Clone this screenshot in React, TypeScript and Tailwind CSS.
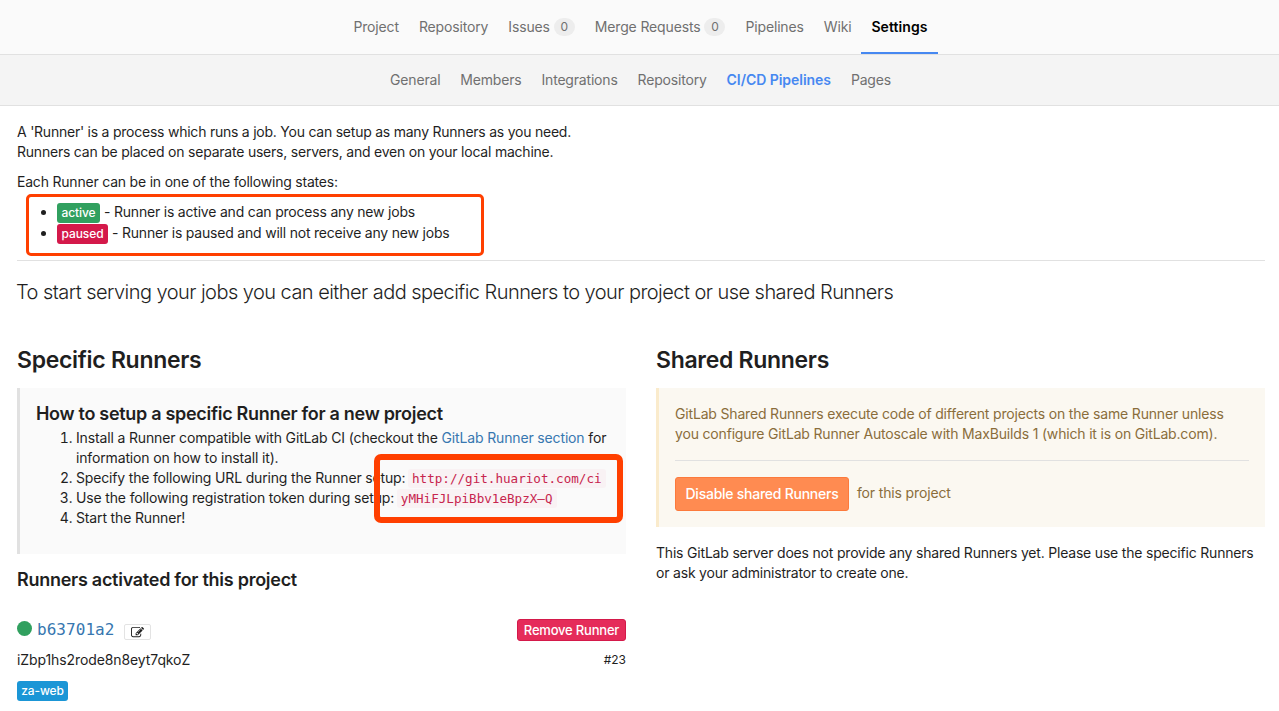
import type { ReactNode } from 'react';

const mainTabs = [
  { label: 'Project' },
  { label: 'Repository' },
  { label: 'Issues', count: 0 },
  { label: 'Merge Requests', count: 0 },
  { label: 'Pipelines' },
  { label: 'Wiki' },
  { label: 'Settings', active: true },
];

const subTabs = ['General', 'Members', 'Integrations', 'Repository', 'CI/CD Pipelines', 'Pages'];

function Code({ children }: { children: ReactNode }) {
  return (
    <code className="-ml-px rounded-[3px] bg-[#f9f2f4] px-1 py-0.5 font-['DejaVu_Sans_Mono',monospace] text-[12.6px] tracking-normal text-[#c7254e]">
      {children}
    </code>
  );
}

function EditIcon() {
  return (
    <svg viewBox="0 0 1792 1792" className="h-[13px] w-[13px] fill-[#1f1f1f]">
      <path d="M888 1184l116-116-152-152-116 116v56h96v96h56zm440-720q-16-16-33 1l-350 350q-17 17-1 33t33-1l350-350q17-17 1-33zm80 594v190q0 119-84.5 203.5t-203.5 84.5h-832q-119 0-203.5-84.5t-84.5-203.5v-832q0-119 84.5-203.5t203.5-84.5h832q63 0 117 25 15 7 18 23 3 17-9 29l-49 49q-14 14-32 8-23-6-45-6h-832q-66 0-113 47t-47 113v832q0 66 47 113t113 47h832q66 0 113-47t47-113v-126q0-13 9-22l64-64q15-15 35-7t20 29zm-96-738l288 288-672 672h-288v-288zm444 132l-92 92-288-288 92-92q28-28 68-28t68 28l152 152q28 28 28 68t-28 68z" />
    </svg>
  );
}

export default function App() {
  return (
    <div className="h-[711px] w-[1279px] overflow-hidden bg-white font-['Inter',sans-serif] text-[14px] leading-5 tracking-[-0.15px] text-[#1f1f1f]">
      <nav className="flex h-[55px] justify-center border-b border-[#e1e1e1] bg-[#fafafa] pl-[2px] text-[#707070]">
        {mainTabs.map((tab) => (
          <a
            key={tab.label}
            className={
              tab.active
                ? 'flex h-[54px] items-center border-b-2 border-[#4688f1] px-[10px] pt-0.5 font-semibold tracking-[0.08px] text-black'
                : 'flex h-[54px] items-center px-[10px] tracking-[-0.15px]'
            }
          >
            {tab.label}
            {tab.count !== undefined && (
              <span className="ml-1 flex h-[18px] w-[21px] items-center justify-center rounded-full bg-[#ededed] text-[12px]">
                {tab.count}
              </span>
            )}
          </a>
        ))}
      </nav>
      <nav className="flex h-[51px] items-center justify-center gap-5 border-b border-[#e1e1e1] bg-[#f4f4f4] pl-[2px] text-[#707070]">
        {subTabs.map((tab) => (
          <a
            key={tab}
            className={
              tab === 'CI/CD Pipelines'
                ? 'font-semibold tracking-[-0.05px] text-[#4688f1]'
                : 'tracking-[-0.19px]'
            }
          >
            {tab}
          </a>
        ))}
      </nav>

      <main className="pt-4 pr-[14px] pl-[17px]">
        <p className="tracking-[-0.235px]">
          A 'Runner' is a process which runs a job. You can setup as many Runners as you need.
          <br />
          <span className="tracking-[-0.22px]">
            Runners can be placed on separate users, servers, and even on your local machine.
          </span>
        </p>
        <div className="relative mt-[10px] tracking-[-0.205px]">
          <p>Each Runner can be in one of the following states:</p>
          <ul className="mt-[10px] list-disc pl-10">
            <li className="h-[21px]">
              <span className="mr-1 inline-block h-5 w-[43px] rounded-[3px] bg-[#31a05f] text-center text-[12px] font-medium tracking-[-0.1px] text-white">
                active
              </span>
              - Runner is active and can process any new jobs
            </li>
            <li className="h-[21px]">
              <span className="mr-1 inline-block h-5 w-[51px] rounded-[3px] bg-[#d4194a] text-center text-[12px] font-medium tracking-[-0.1px] text-white">
                paused
              </span>
              - Runner is paused and will not receive any new jobs
            </li>
          </ul>
          <div className="absolute top-[22px] left-[9px] h-[62px] w-[458px] rounded-[5px] border-3 border-[#ff3f00]" />
        </div>
        <hr className="mt-4 border-[#e1e1e1]" />
        <p className="mt-[17px] -ml-px text-[20px] leading-[28px] font-light tracking-[-0.545px]">
          To start serving your jobs you can either add specific Runners to your project or use shared Runners
        </p>

        <div className="mt-10 grid grid-cols-[609px_609px] gap-[30px]">
          <section>
            <h3 className="text-[23px] leading-7 font-semibold tracking-[-0.3px]">Specific Runners</h3>
            <div className="relative mt-[14px] h-[166px] border-l-3 border-[#e1e1e1] bg-[#fafafa] pt-4 pl-4">
              <h4 className="text-[18px] leading-5 font-semibold tracking-[-0.3px]">
                How to setup a specific Runner for a new project
              </h4>
              <ol className="mt-1 list-decimal pl-10">
                <li>
                  Install a Runner compatible with GitLab CI (checkout the{' '}
                  <a className="text-[#3777b0]">GitLab Runner section</a> for
                  <br />
                  information on how to install it).
                </li>
                <li className="h-5 tracking-[-0.17px] whitespace-nowrap">
                  Specify the following URL during the Runner setup: <Code>http://git.huariot.com/ci</Code>
                </li>
                <li className="h-5 whitespace-nowrap">
                  Use the following registration token during setup: <Code>yMHiFJLpiBbv1eBpzX–Q</Code>
                </li>
                <li>Start the Runner!</li>
              </ol>
              <div className="absolute top-[66px] left-[354px] h-[69px] w-[249px] rounded-[7px] border-6 border-[#ff3f00]" />
            </div>
            <h4 className="mt-4 text-[18px] leading-5 font-semibold tracking-[-0.27px]">
              Runners activated for this project
            </h4>
            <div className="mt-[29px] flex h-[22px] items-center">
              <span className="-mt-1 h-[15px] w-[15px] rounded-full bg-[#31a05f]" />
              <a className="ml-[5px] font-['DejaVu_Sans_Mono',monospace] text-[16px] tracking-[0.05px] text-[#3777b0]">
                b63701a2
              </a>
              <button className="mt-1 ml-[10px] flex h-4 w-[27px] items-center justify-center rounded-[2px] border border-[#e3e3e3] bg-white">
                <EditIcon />
              </button>
              <button className="ml-auto h-[22px] w-[109px] rounded-[3px] border border-[#d4194a] bg-[#e52c5a] text-[13px] leading-5 font-medium tracking-[-0.2px] whitespace-nowrap text-white">
                Remove Runner
              </button>
            </div>
            <div className="mt-[9px] flex items-center justify-between">
              <span className="tracking-[-0.1px]">iZbp1hs2rode8n8eyt7qkoZ</span>
              <small className="text-[12px] tracking-normal">#23</small>
            </div>
            <div className="mt-[11px] flex">
              <span className="h-5 w-[51px] rounded-[3px] bg-[#1b96d6] text-center text-[12px] font-medium tracking-[-0.1px] text-white">
                za-web
              </span>
            </div>
          </section>

          <section>
            <h3 className="text-[23px] leading-7 font-semibold tracking-[-0.3px]">Shared Runners</h3>
            <div className="mt-[14px] h-[139px] border-l-3 border-[#faebcc] bg-[#fbf8f1] px-4 pt-4 text-[#8a6d3b]">
              <p className="tracking-[-0.175px] whitespace-nowrap">
                GitLab Shared Runners execute code of different projects on the same Runner unless
                <br />
                you configure GitLab Runner Autoscale with MaxBuilds 1 (which it is on GitLab.com).
              </p>
              <hr className="mt-4 border-[#e1e1e1]" />
              <div className="mt-4 flex items-center">
                <button className="h-[34px] w-[174px] rounded-[3px] border border-[#fc7a3c] bg-[#ff8b51] font-medium tracking-[-0.25px] whitespace-nowrap text-white">
                  Disable shared Runners
                </button>
                <span className="-mt-0.5 ml-2">for this project</span>
              </div>
            </div>
            <p className="mt-4 tracking-[-0.195px] whitespace-nowrap">
              This GitLab server does not provide any shared Runners yet. Please use the specific Runners
              <br />
              or ask your administrator to create one.
            </p>
          </section>
        </div>
      </main>
    </div>
  );
}
